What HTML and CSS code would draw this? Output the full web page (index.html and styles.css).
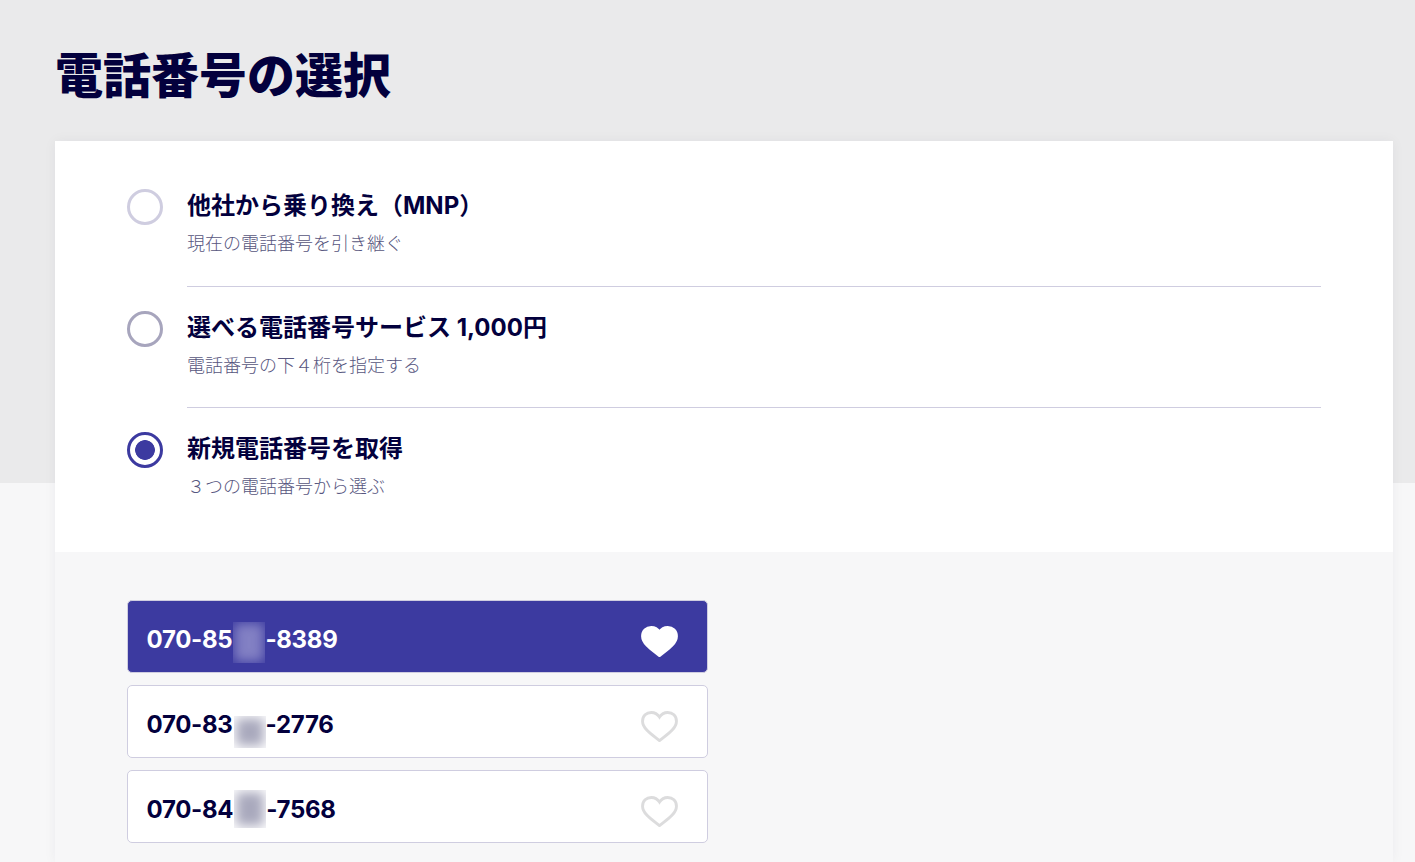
FILE: index.html
```html
<!DOCTYPE html>
<html lang="ja">
<head>
<meta charset="utf-8">
<title>電話番号の選択</title>
<link rel="stylesheet" href="styles.css">
</head>
<body>
<main class="page">
  <h1 class="title">電話番号の選択</h1>
  <section class="card">
    <div class="options">
      <label class="option">
        <span class="radio radio-light"></span>
        <span class="option-text">
          <span class="option-label">他社から乗り換え（MNP）</span>
          <span class="option-sub">現在の電話番号を引き継ぐ</span>
        </span>
      </label>
      <label class="option">
        <span class="radio radio-hover"></span>
        <span class="option-text">
          <span class="option-label">選べる電話番号サービス 1,000円</span>
          <span class="option-sub">電話番号の下４桁を指定する</span>
        </span>
      </label>
      <label class="option">
        <span class="radio radio-on"></span>
        <span class="option-text">
          <span class="option-label">新規電話番号を取得</span>
          <span class="option-sub">３つの電話番号から選ぶ</span>
        </span>
      </label>
    </div>
    <div class="numbers">
      <div class="number number-active">
        <span class="digits">070-85<span class="mask mask-tall"></span>-8389</span>
        <svg class="heart" viewBox="0 0 38 32"><path d="M19 30.500C12 25 1.500 18.500 1.500 10.500C1.500 5 5.500 1.500 10.500 1.500C14 1.500 17 3.200 19 6.200C21 3.200 24 1.500 27.500 1.500C32.500 1.500 36.500 5 36.500 10.500C36.500 18.500 26 25 19 30.500Z"/></svg>
      </div>
      <div class="number">
        <span class="digits">070-83<span class="mask mask-low"></span>-2776</span>
        <svg class="heart" viewBox="0 0 38 32"><path d="M19 30.500C12 25 1.500 18.500 1.500 10.500C1.500 5 5.500 1.500 10.500 1.500C14 1.500 17 3.200 19 6.200C21 3.200 24 1.500 27.500 1.500C32.500 1.500 36.500 5 36.500 10.500C36.500 18.500 26 25 19 30.500Z"/></svg>
      </div>
      <div class="number">
        <span class="digits">070-84<span class="mask"></span>-7568</span>
        <svg class="heart" viewBox="0 0 38 32"><path d="M19 30.500C12 25 1.500 18.500 1.500 10.500C1.500 5 5.500 1.500 10.500 1.500C14 1.500 17 3.200 19 6.200C21 3.200 24 1.500 27.500 1.500C32.500 1.500 36.500 5 36.500 10.500C36.500 18.500 26 25 19 30.500Z"/></svg>
      </div>
    </div>
  </section>
</main>
</body>
</html>
```
FILE: styles.css
```css
html, body {
  margin: 0;
  padding: 0;
  height: 862px;
  overflow: hidden;
}
body {
  background: linear-gradient(#eaeaeb 0 483px, #f7f7f8 483px);
  color: #03003d;
  font-family: "Inter", "Noto Sans CJK JP", sans-serif;
}
.page {
  padding: 0 22px 0 55px;
}
.title {
  margin: 0;
  height: 141px;
  padding-top: 39px;
  box-sizing: border-box;
  font-size: 48px;
  line-height: 66px;
  font-weight: 900;
  font-family: "Noto Sans CJK JP", sans-serif;
}
.card {
  box-shadow: 0 0 12px rgba(5, 0, 63, 0.05);
}
.options {
  background: #fff;
  padding: 24px 72px 0;
  height: 411px;
  box-sizing: border-box;
}
.option {
  display: flex;
  align-items: flex-start;
  height: 121px;
  padding-top: 24px;
  box-sizing: border-box;
  gap: 24px;
}
.option:first-child {
  height: 122px;
}
.radio {
  flex: none;
  width: 36px;
  height: 36px;
  box-sizing: border-box;
  border: 3px solid #cfcde0;
  border-radius: 50%;
  background: #fff;
}
.radio-hover {
  border-color: #a7a5bd;
}
.radio-on {
  border-color: #3c3aa0;
  background: radial-gradient(circle, #3c3aa0 0 9.500px, #fff 10.200px);
}
.option-text {
  flex: 1;
  display: flex;
  flex-direction: column;
  box-sizing: border-box;
  height: 100%;
}
.option:not(:last-child) .option-text {
  border-bottom: 1px solid #cfcde0;
}
.option-label {
  font-size: 24px;
  line-height: 34px;
  font-weight: 700;
  font-family: "Inter", "Noto Sans CJK JP", sans-serif;
  color: #03003d;
}
.option-sub {
  margin-top: 7px;
  font-size: 18px;
  line-height: 24px;
  font-weight: 300;
  color: #575680;
  font-family: "Noto Sans CJK JP", sans-serif;
}
.numbers {
  background: #f7f7f8;
  padding: 48px 72px 19px;
  display: flex;
  flex-direction: column;
  gap: 12px;
}
.number {
  width: 581px;
  height: 73px;
  box-sizing: border-box;
  display: flex;
  align-items: center;
  justify-content: space-between;
  padding: 7px 29px 0 18.500px;
  background: #fff;
  border: 1px solid #cfcde0;
  border-radius: 5px;
  color: #03003d;
}
.number-active {
  background: #3c3aa0;
  color: #fff;
}
.digits {
  display: flex;
  align-items: center;
  font-size: 24px;
  line-height: 32px;
  font-weight: 700;
  letter-spacing: -0.3px;
  font-family: "Inter", sans-serif;
}
.mask {
  display: block;
  width: 32px;
  height: 38px;
  margin-left: 1px;
  transform: translateY(-1px);
  background: #a9a9bd;
  box-shadow: inset 0 0 12px 2px #fff;
}
.mask-low {
  height: 32px;
  transform: translateY(7px);
}
.mask-tall {
  height: 41px;
  transform: translateY(2px);
  background: #8381c4;
  box-shadow: inset 0 0 12px 1px #3c3aa0;
}
.heart {
  width: 37px;
  height: 31px;
  margin-top: 3px;
  fill: none;
  stroke: #dcdcdd;
  stroke-width: 3;
}
.number-active .heart {
  fill: #fff;
  stroke: #fff;
}
```
